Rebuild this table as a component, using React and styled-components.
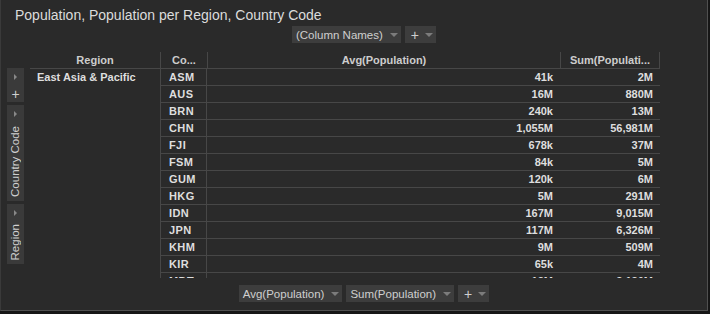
import React from "react";
import styled, { createGlobalStyle } from "styled-components";

const rows = [
  ["ASM", "41k", "2M"],
  ["AUS", "16M", "880M"],
  ["BRN", "240k", "13M"],
  ["CHN", "1,055M", "56,981M"],
  ["FJI", "678k", "37M"],
  ["FSM", "84k", "5M"],
  ["GUM", "120k", "6M"],
  ["HKG", "5M", "291M"],
  ["IDN", "167M", "9,015M"],
  ["JPN", "117M", "6,326M"],
  ["KHM", "9M", "509M"],
  ["KIR", "65k", "4M"],
  ["MDT", "12M", "2,120M"],
];

const GlobalStyle = createGlobalStyle`
  html, body {
    margin: 0;
    background: #161616;
  }
  * {
    box-sizing: border-box;
  }
`;

const Panel = styled.div`
  width: 708px;
  height: 311px;
  background: #2a2a2a;
  border-right: 1px solid #505050;
  border-bottom: 1px solid #505050;
  border-left: 1px solid #3a3a3a;
  font-family: "Liberation Sans", Arial, sans-serif;
  color: #d4d4d4;
  display: flex;
  flex-direction: column;
`;

const Title = styled.div`
  font-size: 14px;
  line-height: 20px;
  padding: 5px 0 0 14px;
  color: #dcdcdc;
`;

const PillBar = styled.div`
  display: flex;
  justify-content: center;
  gap: 4px;
  padding-left: 20px;
  height: 17px;
  margin-top: ${(p) => p.$top || 0}px;
`;

const Pill = styled.div`
  display: flex;
  align-items: center;
  gap: ${(p) => (p.$plus ? 6 : 7)}px;
  height: 17px;
  padding: 0 3px 0 ${(p) => (p.$plus ? 6 : 4)}px;
  background: #3d3d3d;
  color: #cfcfcf;
  font-size: ${(p) => (p.$plus ? 14 : 11.5)}px;
`;

const Caret = styled.span`
  width: 0;
  height: 0;
  border-left: 4px solid transparent;
  border-right: 4px solid transparent;
  border-top: 4px solid #7c7c7c;
`;

const Body = styled.div`
  display: flex;
  gap: 6px;
  padding-left: 6px;
  margin-top: 9px;
`;

const Sidebar = styled.div`
  display: flex;
  flex-direction: column;
  gap: 3px;
  margin-top: 16px;
  width: 17px;
`;

const Tab = styled.div`
  height: ${(p) => p.$h}px;
  background: #3a3a3a;
  display: flex;
  flex-direction: column;
  align-items: center;
  padding: 6px 0 4px;
  color: #cfcfcf;
`;

const Arrow = styled.span`
  width: 0;
  height: 0;
  border-top: 3px solid transparent;
  border-bottom: 3px solid transparent;
  border-left: 3px solid #888;
`;

const TabPlus = styled.span`
  margin-top: 7px;
  font-size: 14px;
  line-height: 14px;
`;

const VerticalLabel = styled.span`
  margin-top: auto;
  writing-mode: vertical-rl;
  transform: rotate(180deg);
  font-size: 11.5px;
  line-height: 17px;
`;

const Table = styled.div`
  display: grid;
  grid-template-columns: 130px 47px 353px 100px;
  grid-auto-rows: 17px;
  height: 226px;
  overflow: hidden;
  font-size: 11px;
  font-weight: bold;
`;

const Head = styled.div`
  text-align: center;
  line-height: 17px;
  color: #cdcdcd;
  border-bottom: 1px solid #474747;
  border-left: ${(p) => (p.$first ? "none" : "1px solid #474747")};
  border-right: ${(p) => (p.$last ? "1px solid #474747" : "none")};
  white-space: nowrap;
`;

const RegionCell = styled.div`
  grid-column: 1;
  grid-row: 2 / span 13;
  padding-left: 7px;
  line-height: 16px;
  color: #dedede;
`;

const Code = styled.div`
  padding-left: 8px;
  line-height: 16px;
  letter-spacing: 0.4px;
  border-left: 1px solid #474747;
  border-right: 1px solid #474747;
  border-bottom: 1px solid #474747;
  color: #dedede;
`;

const Num = styled.div`
  text-align: right;
  padding-right: 7px;
  line-height: 16px;
  border-bottom: 1px solid #474747;
  color: #dedede;
`;

export default function App() {
  return (
    <>
      <GlobalStyle />
      <Panel>
        <Title>Population, Population per Region, Country Code</Title>
        <PillBar $top={1}>
          <Pill>
            (Column Names) <Caret />
          </Pill>
          <Pill $plus>
            + <Caret />
          </Pill>
        </PillBar>
        <Body>
          <Sidebar>
            <Tab $h={34}>
              <Arrow />
              <TabPlus>+</TabPlus>
            </Tab>
            <Tab $h={96}>
              <Arrow />
              <VerticalLabel>Country Code</VerticalLabel>
            </Tab>
            <Tab $h={60}>
              <Arrow />
              <VerticalLabel>Region</VerticalLabel>
            </Tab>
          </Sidebar>
          <Table>
            <Head $first>Region</Head>
            <Head>Co...</Head>
            <Head>Avg(Population)</Head>
            <Head $last>Sum(Populati...</Head>
            <RegionCell>East Asia &amp; Pacific</RegionCell>
            {rows.map(([code, avg, sum]) => (
              <React.Fragment key={code}>
                <Code>{code}</Code>
                <Num>{avg}</Num>
                <Num>{sum}</Num>
              </React.Fragment>
            ))}
          </Table>
        </Body>
        <PillBar $top={7}>
          <Pill>
            Avg(Population) <Caret />
          </Pill>
          <Pill>
            Sum(Population) <Caret />
          </Pill>
          <Pill $plus>
            + <Caret />
          </Pill>
        </PillBar>
      </Panel>
    </>
  );
}
